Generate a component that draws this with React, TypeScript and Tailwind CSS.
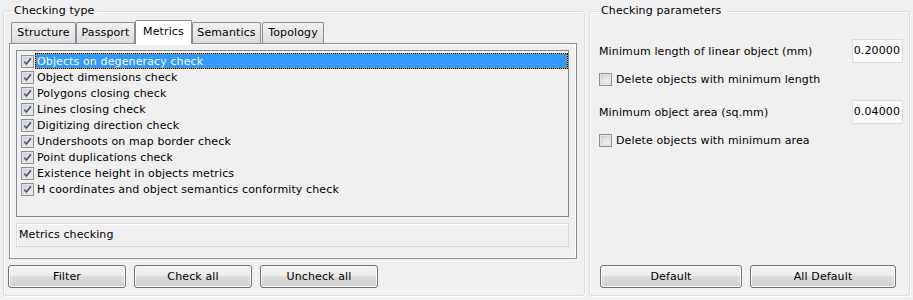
import type { ReactNode } from "react";

const checks = [
  "Objects on degeneracy check",
  "Object dimensions check",
  "Polygons closing check",
  "Lines closing check",
  "Digitizing direction check",
  "Undershoots on map border check",
  "Point duplications check",
  "Existence height in objects metrics",
  "H coordinates and object semantics conformity check",
];

const tabs = [
  { label: "Structure", w: "w-[65px]" },
  { label: "Passport", w: "w-[59px]" },
  { label: "Metrics", w: "w-[57px]", active: true },
  { label: "Semantics", w: "w-[69px]" },
  { label: "Topology", w: "w-[62px]" },
];

function CheckBox({ checked = false }: { checked?: boolean }) {
  return (
    <svg width="13" height="13" viewBox="0 0 13 13" className="shrink-0">
      <defs>
        <linearGradient id="cbfill" x1="0" y1="0" x2="1" y2="1">
          <stop offset="0" stopColor="#d4d4d4" />
          <stop offset="1" stopColor="#f6f6f6" />
        </linearGradient>
      </defs>
      <rect x="0.5" y="0.5" width="12" height="12" fill="#f4f4f4" stroke="#8e8f8f" />
      <rect x="2" y="2" width="9" height="9" fill="url(#cbfill)" stroke="#c4c4c4" strokeWidth="0.6" />
      {checked && (
        <path d="M3.3 6.6 L5.4 9 L9.8 3.4" fill="none" stroke="#4b5b83" strokeWidth="1.7" />
      )}
    </svg>
  );
}

function Button({ children, w }: { children: ReactNode; w: string }) {
  return (
    <button
      className={`${w} h-[23px] pt-[2px] rounded-[3px] border border-[#707070] bg-[linear-gradient(#f2f2f2_0%,#ebebeb_50%,#dddddd_50%,#cfcfcf_100%)] shadow-[inset_0_0_0_1px_#fcfcfc] text-black`}
    >
      {children}
    </button>
  );
}

function Group({
  title,
  className,
  legend,
  children,
}: {
  title: string;
  className: string;
  legend: string;
  children: ReactNode;
}) {
  return (
    <fieldset
      className={`${className} h-[292px] rounded-[3px] border border-[#d5dfe5] shadow-[inset_1px_1px_0_#ffffff,1px_1px_0_#ffffff]`}
    >
      <legend className={`${legend} px-[3px] leading-[14px] text-black`}>{title}</legend>
      {children}
    </fieldset>
  );
}

export default function App() {
  return (
    <div className="w-[913px] h-[300px] bg-[#f0f0f0] flex gap-[4px] px-[3px] pt-[4px] text-[11px] tracking-[0.12px] text-black font-['DejaVu_Sans',Verdana,sans-serif] overflow-hidden">
      <Group title="Checking type" legend="ml-[3px]" className="w-[582px] pl-[4px] pr-[7px]">
        <div className="ml-[1px] pt-[2px]">
          <div className="flex items-end h-[23px] pl-[2px] relative z-10">
            {tabs.map((t) =>
              t.active ? (
                <div
                  key={t.label}
                  className={`${t.w} h-[24px] -mb-[1px] flex items-start pt-[3px] justify-center border border-b-0 border-[#898c95] bg-white rounded-t-[2px]`}
                >
                  {t.label}
                </div>
              ) : (
                <div
                  key={t.label}
                  className={`${t.w} h-[21px] pt-[1px] flex items-center justify-center border border-b-0 border-[#898c95] bg-[linear-gradient(#f2f2f2,#dcdcdc)] rounded-t-[2px] ${t.label === "Topology" ? "ml-[1px]" : ""}`}
                >
                  {t.label}
                </div>
              )
            )}
          </div>
          <div className="h-[216px] border border-[#898c95] shadow-[inset_1px_1px_0_#ffffff,inset_-1px_-1px_0_#ffffff] pl-[6px] pr-[7px] pt-[6px] flex flex-col">
            <div className="h-[167px] border border-[#828790] pt-[2px] pl-[4px] pr-[0px]">
              {checks.map((c, i) => (
                <div key={c} className="h-[16px] flex items-center">
                  <CheckBox checked />
                  {i === 0 ? (
                    <div className="ml-[1px] flex-1 h-[16px] flex items-center pl-[1px] pt-[2px] bg-[#3399ff] border border-[#ff9900] outline-1 outline-dotted outline-black -outline-offset-1 text-white">
                      {c}
                    </div>
                  ) : (
                    <div className="ml-[2px] pl-[1px] pt-[2px]">{c}</div>
                  )}
                </div>
              ))}
            </div>
            <div className="mt-[6px] h-[24px] pt-[1px] border border-[#dadada] shadow-[inset_1px_1px_0_#ffffff] flex items-center pl-[2px]">
              Metrics checking
            </div>
          </div>
          <div className="mt-[6px] -ml-[1px] flex gap-[8px]">
            <Button w="w-[118px]">Filter</Button>
            <Button w="w-[118px]">Check all</Button>
            <Button w="w-[118px]">Uncheck all</Button>
          </div>
        </div>
      </Group>
      <Group title="Checking parameters" legend="-ml-[1px]" className="w-[321px] pl-[9px] pr-[6px]">
        <div className="flex flex-col h-[270px]">
          <div className="mt-[21px] flex items-center justify-between h-[24px]">
            <span className="pt-[2px]">Minimum length of linear object (mm)</span>
            <div className="w-[51px] h-[24px] pt-[1px] border border-[#dcdcdc] bg-[#fbfbfb] flex items-center justify-end pr-[2px]">
              0.20000
            </div>
          </div>
          <label className="mt-[10px] flex items-center gap-[4px] h-[13px]">
            <CheckBox />
            <span className="pt-[2px]">Delete objects with minimum length</span>
          </label>
          <div className="mt-[14px] flex items-center justify-between h-[24px]">
            <span className="pt-[2px]">Minimum object area (sq.mm)</span>
            <div className="w-[51px] h-[24px] pt-[1px] border border-[#dcdcdc] bg-[#fbfbfb] flex items-center justify-end pr-[2px]">
              0.04000
            </div>
          </div>
          <label className="mt-[10px] flex items-center gap-[4px] h-[13px]">
            <CheckBox />
            <span className="pt-[2px]">Delete objects with minimum area</span>
          </label>
          <div className="mt-auto flex gap-[8px] pl-[1px]">
            <Button w="w-[142px]">Default</Button>
            <Button w="w-[146px]">All Default</Button>
          </div>
        </div>
      </Group>
    </div>
  );
}
